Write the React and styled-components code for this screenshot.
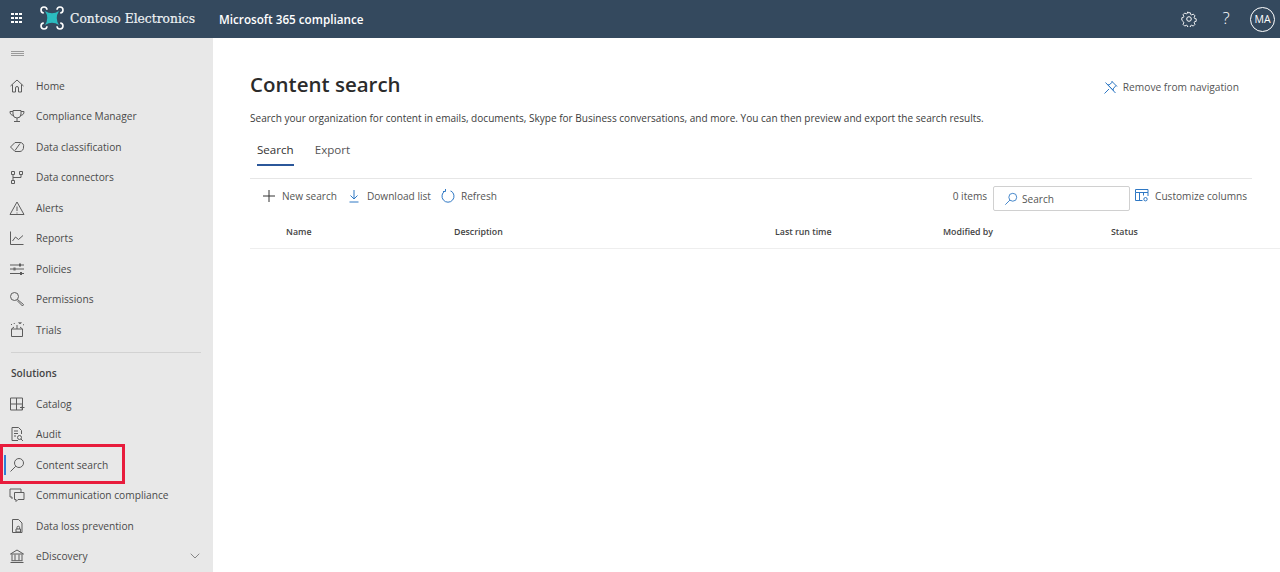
import React from "react";
import styled, { createGlobalStyle } from "styled-components";
import { ChevronDown } from "lucide-react";

const GlobalStyle = createGlobalStyle`
  html, body {
    margin: 0;
    height: 100%;
    overflow: hidden;
    background: #fff;
    font-family: "Open Sans", "Liberation Sans", sans-serif;
  }
  * { box-sizing: border-box; }
`;

const BLUE = "#2f78c4";

const Icon = ({ size = 16, color = "#5c5c5c", children }) => (
  <svg width={size} height={size} viewBox="0 0 16 16" fill="none" stroke={color} strokeWidth="1">
    {children}
  </svg>
);

const navIcons = {
  home: <path d="M1.500 8 8 2l6.500 6M3.500 6.500V14h3v-4a1.500 1.500 0 0 1 3 0v4h3V6.500" />,
  trophy: (
    <path d="M4 2.500h8V6a4 4 0 0 1-8 0V2.500ZM4 3.500H1c0 2.500 1 3.500 3.500 4M12 3.500h3c0 2.500-1 3.500-3.500 4M8 10v3M5 13.500h6" />
  ),
  tag: <path d="M1.500 8 6 3.500h5a3.500 3.500 0 0 1 3.500 4.500A4 4 0 0 1 11 12.500H6L1.500 8ZM6 11.500l5-7" />,
  connectors: (
    <path d="M2.500 2.500h3v3h-3zM10.500 2.500h3v3h-3zM2.500 11.500h3v3h-3zM4 5.500v6M12 5.500v3H4" />
  ),
  alert: <path d="M8 2 1 14.500h14L8 2ZM8 6.500v4.500M8 12.500v1" />,
  reports: <path d="M1.500 1.500v13h13M3.500 11l3-4 3 2.500 4.500-4" />,
  policies: (
    <path d="M1 4h14M1 8h14M1 12.500h14M10.500 2.500v3M11.500 2.500v3M5 6.500v3M6 6.500v3M11.500 11v3M12.500 11v3" />
  ),
  permissions: (
    <path d="M1.500 5.500a4 4 0 1 1 8 0 4 4 0 0 1-8 0ZM8.500 8.500l6 5-1 1.500-5.500-5.500" />
  ),
  trials: (
    <path d="M2.500 7h11v7.500h-11zM2.500 7 5 5M13.500 7 11 5M8 7V3M2 2l1 1M5 1l.5 1M11 1.500a1 1 0 1 1 .01 0M14 3l1-.5" />
  ),
  catalog: <path d="M1.500 2h12v12h-12zM1.500 8h12M7.500 2v12M11 11.500h4.500M13.200 9.500v4.500" />,
  audit: <path d="M3 1.500h6.500l3 3V8M3 1.500v13h6M5 5h4M5 7.500h4M5 10h2M10.500 9.500a2 2 0 1 1 0 4 2 2 0 0 1 0-4ZM12 13l2 2" />,
  search: <path d="M10 1.500a4.500 4.500 0 1 1 0 9 4.500 4.500 0 0 1 0-9ZM6.800 9.200 1.500 14.500" />,
  comm: <path d="M5.500 5.500h9.500v7H9l-2 2v-2H5.500v-7ZM3 10H1V2h11v3M3 10v2" />,
  dlp: <path d="M3.500 1.500h6l3.500 3.500v9.500H3.500v-13ZM7 11h4.500v3H7zM8 11V9.500a1.300 1.300 0 0 1 2.600 0V11" />,
  ediscovery: (
    <path d="M1.500 6 8 2l6.500 4h-13ZM3 6.500v6M6 6.500v6M10 6.500v6M13 6.500v6M1.500 14.500h13M2.500 12.700h11" />
  ),
};

const topItems = [
  ["home", "Home"],
  ["trophy", "Compliance Manager"],
  ["tag", "Data classification"],
  ["connectors", "Data connectors"],
  ["alert", "Alerts"],
  ["reports", "Reports"],
  ["policies", "Policies"],
  ["permissions", "Permissions"],
  ["trials", "Trials"],
];

const solutionItems = [
  ["catalog", "Catalog"],
  ["audit", "Audit"],
  ["search", "Content search"],
  ["comm", "Communication compliance"],
  ["dlp", "Data loss prevention"],
  ["ediscovery", "eDiscovery"],
];

const NavRow = ({ icon, label }) => {
  const active = label === "Content search";
  return (
    <NavItem $active={active}>
      <Icon>{navIcons[icon]}</Icon>
      <NavLabel>{label}</NavLabel>
      {label === "eDiscovery" && (
        <Chevron>
          <ChevronDown size={16} strokeWidth={1} color="#555" />
        </Chevron>
      )}
      {active && <Highlight />}
    </NavItem>
  );
};

const App = () => (
  <Page>
    <GlobalStyle />
    <TopBar>
      <Waffle>
        {Array.from({ length: 9 }).map((_, i) => (
          <i key={i} />
        ))}
      </Waffle>
      <Logo width="24" height="24" viewBox="0 0 24 24" fill="none">
        <path d="M5 5Q12 9.500 19 5 14.500 12 19 19 12 14.500 5 19 9.500 12 5 5Z" fill="#2bbcc0" />
        <path
          d="M7 3.800A3 3 0 1 0 3.800 7M17 3.800A3 3 0 1 1 20.200 7M7 20.200A3 3 0 1 1 3.800 17M17 20.200A3 3 0 1 0 20.200 17"
          stroke="#fff"
          strokeWidth="1.600"
        />
      </Logo>
      <Brand>Contoso Electronics</Brand>
      <AppName>Microsoft 365 compliance</AppName>
      <TopActions>
        <svg width="16" height="16" viewBox="0 0 16 16" fill="none" stroke="#fff" strokeWidth="1">
          <path d="M6.600 1h2.800l.4 1.900 1.300.6 1.600-1 2 2-1 1.600.5 1.300 1.800.4v2.800l-1.800.4-.5 1.300 1 1.600-2 2-1.600-1-1.300.5-.4 1.900H6.600l-.4-1.900-1.300-.5-1.600 1-2-2 1-1.600-.5-1.300L0 9.400V6.600l1.800-.4.500-1.300-1-1.600 2-2 1.600 1 1.300-.6.400-1.700Z" transform="translate(0.800 0.800) scale(.9)" />
          <circle cx="8" cy="8" r="2.300" />
        </svg>
        <Help>?</Help>
        <Avatar>MA</Avatar>
      </TopActions>
    </TopBar>
    <Body>
      <Sidebar>
        <Hamburger>
          <i />
          <i />
          <i />
        </Hamburger>
        <NavList>
          {topItems.map(([icon, label]) => (
            <NavRow key={label} icon={icon} label={label} />
          ))}
        </NavList>
        <Divider />
        <SectionTitle>Solutions</SectionTitle>
        <NavList>
          {solutionItems.map(([icon, label]) => (
            <NavRow key={label} icon={icon} label={label} />
          ))}
        </NavList>
      </Sidebar>
      <Main>
        <TitleRow>
          <Title>Content search</Title>
          <RemoveLink>
            <Icon color={BLUE}>
              <path d="M1.500 14.500 6 10M8.500 2 14 7.500M9.500 3 6 6 4.500 5.500l6 6L10 10l3-3.500M2.500 3.500l10 10.500" />
            </Icon>
            Remove from navigation
          </RemoveLink>
        </TitleRow>
        <Description>
          Search your organization for content in emails, documents, Skype for Business
          conversations, and more. You can then preview and export the search results.
        </Description>
        <Tabs>
          <Tab $active>Search</Tab>
          <Tab>Export</Tab>
        </Tabs>
        <Toolbar>
          <ToolButton>
            <Icon color="#333">
              <path d="M8 2v12M2 8h12" />
            </Icon>
            New search
          </ToolButton>
          <ToolButton>
            <Icon color={BLUE}>
              <path d="M8 2v9M4.500 7.500 8 11l3.500-3.500M3.500 14h9" />
            </Icon>
            Download list
          </ToolButton>
          <ToolButton>
            <Icon color={BLUE}>
              <path d="M5 3a6 6 0 1 0 6 0M5.500 1v2.500H3M10.500 3l.5.2" />
            </Icon>
            Refresh
          </ToolButton>
          <ToolbarRight>
            <ItemCount>0 items</ItemCount>
            <SearchBox>
              <Icon size={14} color={BLUE}>
                {navIcons.search}
              </Icon>
              Search
            </SearchBox>
            <ToolButton>
              <Icon color={BLUE}>
                <path d="M1.500 1.500h12.500v3H1.500zM1.500 4.500v8h7M5.500 4.500v8M9.500 4.500v3M14 4.500V8M11.500 9.500a1.700 1.700 0 1 1 0 3.400 1.700 1.700 0 0 1 0-3.400Z" />
              </Icon>
              Customize columns
            </ToolButton>
          </ToolbarRight>
        </Toolbar>
        <TableHead>
          <Col $w="168px">Name</Col>
          <Col $w="321px">Description</Col>
          <Col $w="168px">Last run time</Col>
          <Col $w="168px">Modified by</Col>
          <Col>Status</Col>
        </TableHead>
      </Main>
    </Body>
  </Page>
);

export default App;

const Page = styled.div`
  display: flex;
  flex-direction: column;
  height: 100vh;
  overflow: hidden;
`;

const TopBar = styled.header`
  display: flex;
  align-items: center;
  flex: 0 0 38px;
  padding: 0 5px 0 11px;
  background: #34495e;
  color: #fff;
`;

const Waffle = styled.div`
  display: grid;
  grid-template-columns: repeat(3, 2.600px);
  gap: 1.600px;
  margin-bottom: 2px;
  i {
    width: 2.600px;
    height: 2.600px;
    background: #fff;
  }
`;

const Logo = styled.svg`
  flex: none;
  margin: 0 0 2px 18px;
`;

const Brand = styled.span`
  margin-left: 6px;
  font-family: "DejaVu Serif", serif;
  font-size: 12.300px;
  color: #eef2f4;
  -webkit-text-stroke: 0.2px #eef2f4;
`;

const AppName = styled.span`
  margin-left: 24px;
  font-size: 11.700px;
  font-weight: 600;
`;

const TopActions = styled.div`
  display: flex;
  align-items: center;
  margin-left: auto;
  gap: 20px;
  svg {
    flex: none;
  }
`;

const Help = styled.span`
  width: 8px;
  margin: 0 0 3px 5px;
  font-size: 17px;
  font-weight: 300;
  text-align: center;
`;

const Avatar = styled.span`
  display: flex;
  align-items: center;
  justify-content: center;
  width: 25px;
  height: 25px;
  border: 1px solid #fff;
  border-radius: 50%;
  font-size: 10.500px;
`;

const Body = styled.div`
  display: flex;
  flex: 1;
  min-height: 0;
`;

const Sidebar = styled.nav`
  flex: 0 0 213px;
  background: #e8e8e8;
  overflow: hidden;
`;

const Hamburger = styled.div`
  display: flex;
  flex-direction: column;
  gap: 1px;
  padding: 13px 0 0 11px;
  height: 32.400px;
  i {
    width: 13px;
    height: 1px;
    background: #9a9a9a;
  }
`;

const NavList = styled.div`
  display: flex;
  flex-direction: column;
`;

const NavItem = styled.div`
  position: relative;
  display: flex;
  align-items: center;
  gap: 11px;
  height: 30.560px;
  padding: 0 10px 0 9px;
  font-size: 10.200px;
  color: #4a4a4a;
  ${(p) =>
    p.$active &&
    `
    &::before {
      content: "";
      position: absolute;
      left: 4px;
      top: 6px;
      bottom: 5px;
      width: 2px;
      background: #2f80d8;
    }
  `}
`;

const NavLabel = styled.span`
  white-space: nowrap;
`;

const Chevron = styled.span`
  display: flex;
  margin-left: auto;
`;

const Highlight = styled.span`
  position: absolute;
  left: 0;
  top: -5px;
  width: 125px;
  height: 40px;
  border: 3px solid #e81c3c;
`;

const Divider = styled.div`
  height: 1px;
  margin: 7px 12px 0 11px;
  background: #d2d2d2;
`;

const SectionTitle = styled.div`
  display: flex;
  align-items: center;
  height: 35px;
  padding: 4px 0 0 11px;
  font-size: 10.200px;
  font-weight: 600;
  color: #444;
`;

const Main = styled.main`
  flex: 1;
  min-width: 0;
  padding: 30px 0 0 37px;
`;

const TitleRow = styled.div`
  display: flex;
  align-items: center;
  justify-content: space-between;
  padding-right: 41px;
`;

const Title = styled.h1`
  margin: 0;
  font-size: 20.500px;
  line-height: 32px;
  font-weight: 600;
  color: #2b2b2b;
`;

const RemoveLink = styled.span`
  display: flex;
  align-items: center;
  gap: 4px;
  padding-top: 6px;
  font-size: 10.200px;
  color: #555;
`;

const Description = styled.p`
  margin: 10px 0 0;
  font-size: 10.060px;
  line-height: 16px;
  color: #3c3c3c;
`;

const Tabs = styled.div`
  display: flex;
  gap: 21px;
  margin-top: 14px;
  padding-left: 7px;
`;

const Tab = styled.span`
  padding-bottom: 4px;
  font-size: 11.600px;
  line-height: 20px;
  color: ${(p) => (p.$active ? "#333" : "#555")};
  border-bottom: 2px solid ${(p) => (p.$active ? "#2b579a" : "transparent")};
`;

const Toolbar = styled.div`
  display: flex;
  align-items: center;
  height: 35px;
  margin: 12px 28px 0 0;
  padding: 0 5px 1px 11px;
  gap: 9px;
  border-top: 1px solid #e6e6e6;
`;

const ToolButton = styled.span`
  display: flex;
  align-items: center;
  gap: 5px;
  font-size: 10.100px;
  color: #555;
  white-space: nowrap;
`;

const ToolbarRight = styled.div`
  display: flex;
  align-items: center;
  margin-left: auto;
  gap: 4px;
`;

const ItemCount = styled.span`
  margin-right: 2px;
  font-size: 10.100px;
  color: #555;
`;

const SearchBox = styled.div`
  display: flex;
  align-items: center;
  gap: 4px;
  width: 137px;
  height: 25px;
  margin-top: 6px;
  padding-left: 10px;
  border: 1px solid #d0d0d0;
  border-radius: 2px;
  font-size: 10.100px;
  color: #555;
`;

const TableHead = styled.div`
  display: flex;
  align-items: center;
  height: 36px;
  padding: 3px 0 0 36px;
  border-bottom: 1px solid #eeeeee;
  font-size: 8.800px;
  font-weight: 600;
  color: #444;
`;

const Col = styled.span`
  flex: 0 0 ${(p) => p.$w || "auto"};
`;
